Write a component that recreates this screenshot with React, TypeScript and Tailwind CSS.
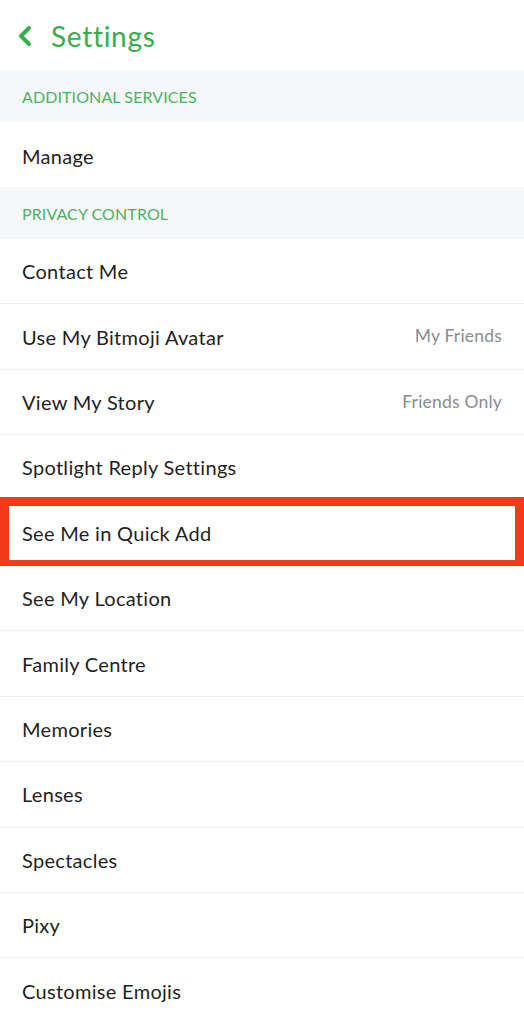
import React from "react";

const font = { fontFamily: "Lato, 'Noto Sans', sans-serif" };

function Section({ title }: { title: string }) {
  return (
    <div className="h-[52px] bg-[#f6f7f8] flex items-center pl-[22px] pt-[2px]">
      <span className="text-[16px] tracking-[0.1px] text-[#4cb263]">{title}</span>
    </div>
  );
}

function Row({ label, value, highlight, last }: { label: string; value?: string; highlight?: boolean; last?: boolean }) {
  return (
    <div className={`relative h-[65.4px] flex items-center justify-between pl-[22px] pr-[22px] bg-white ${last ? "" : "border-b border-[#f0f1f2]"}`}>
      <span className="text-[20px] tracking-[0.3px] text-[#1f1f22]">{label}</span>
      {value && <span className="text-[17.5px] tracking-[0.2px] text-[#8b8b90]">{value}</span>}
      {highlight && (
        <div className="absolute left-0 right-0 top-[-4px] bottom-[-4px] border-[9px] border-[#f2391a] pointer-events-none" />
      )}
    </div>
  );
}

export default function App() {
  return (
    <div className="w-[524px] h-[1024px] bg-white overflow-hidden" style={font}>
      <div className="h-[70px] flex items-center pl-[17px] gap-[18px] pt-[2px]">
        <svg width="16" height="22" viewBox="0 0 16 22">
          <path d="M12 3 L4 11 L12 19" fill="none" stroke="#37ad4c" strokeWidth="4" strokeLinecap="round" strokeLinejoin="round" />
        </svg>
        <span className="text-[28px] tracking-[0.7px] text-[#37ad4c]">Settings</span>
      </div>
      <Section title="ADDITIONAL SERVICES" />
      <div className="h-[65px] flex items-center pl-[22px] pt-[2px]">
        <span className="text-[20px] tracking-[0.3px] text-[#1f1f22]">Manage</span>
      </div>
      <Section title="PRIVACY CONTROL" />
      <Row label="Contact Me" />
      <Row label="Use My Bitmoji Avatar" value="My Friends" />
      <Row label="View My Story" value="Friends Only" />
      <Row label="Spotlight Reply Settings" />
      <Row label="See Me in Quick Add" highlight />
      <Row label="See My Location" />
      <Row label="Family Centre" />
      <Row label="Memories" />
      <Row label="Lenses" />
      <Row label="Spectacles" />
      <Row label="Pixy" />
      <Row label="Customise Emojis" last />
    </div>
  );
}
